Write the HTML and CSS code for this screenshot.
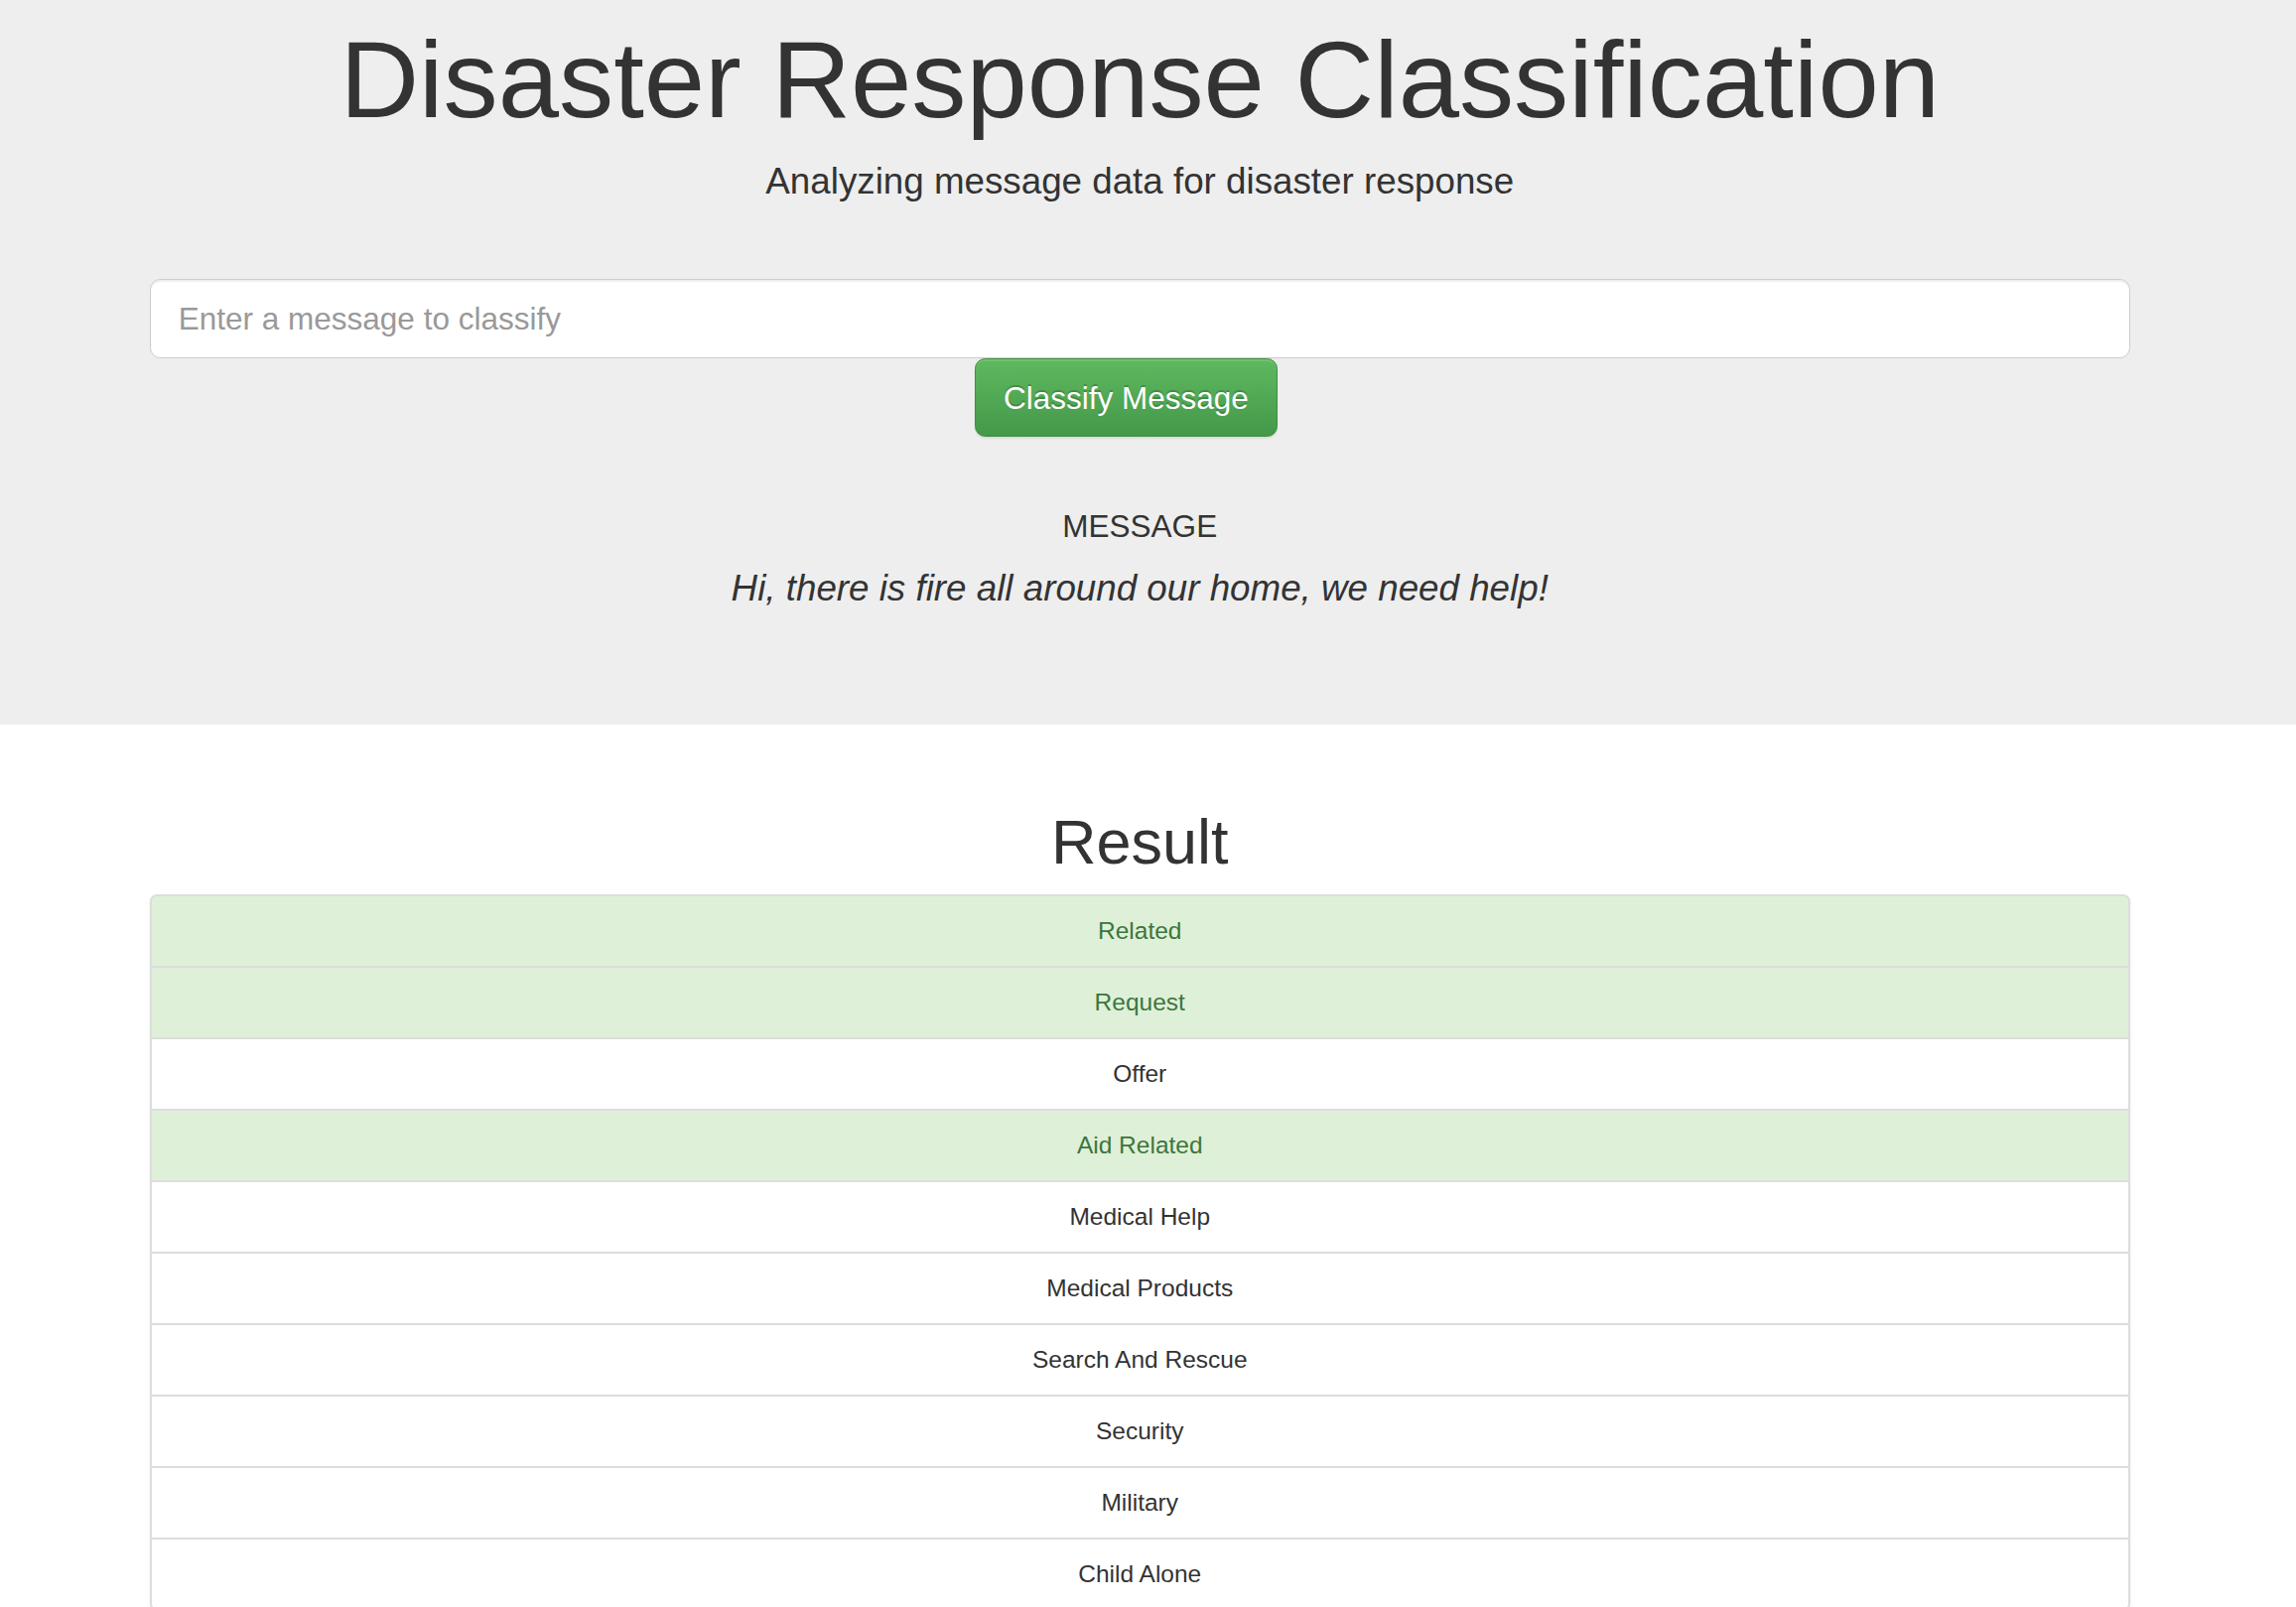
FILE: index.html
```html
<!DOCTYPE html>
<html lang="en">
<head>
<meta charset="utf-8">
<title>Disaster Response Classification</title>
<link rel="stylesheet" href="styles.css">
</head>
<body>
<div class="jumbotron">
  <div class="container">
    <h1 class="title">Disaster Response Classification</h1>
    <p class="lead">Analyzing message data for disaster response</p>
    <hr class="rule">
    <form class="query-form" action="#" method="get">
      <input type="text" class="query-input" name="query" placeholder="Enter a message to classify">
      <div class="button-offset">
        <button type="submit" class="btn-classify">Classify Message</button>
      </div>
    </form>
    <hr class="rule rule-message">
    <h4 class="message-label">MESSAGE</h4>
    <p class="message-text"><i>Hi, there is fire all around our home, we need help!</i></p>
  </div>
</div>
<div class="container results">
  <h1 class="result-title">Result</h1>
  <ul class="list-group">
    <li class="list-item success">Related</li>
    <li class="list-item success">Request</li>
    <li class="list-item">Offer</li>
    <li class="list-item success">Aid Related</li>
    <li class="list-item">Medical Help</li>
    <li class="list-item">Medical Products</li>
    <li class="list-item">Search And Rescue</li>
    <li class="list-item">Security</li>
    <li class="list-item">Military</li>
    <li class="list-item">Child Alone</li>
  </ul>
</div>
</body>
</html>
```

FILE: styles.css
```css
html {
  overflow: hidden;
}

body {
  margin: 0;
  font-family: "Liberation Sans", Arial, Helvetica, sans-serif;
  font-size: 24.5px;
  line-height: 35px;
  color: #333;
  background: #fff;
}

.container {
  box-sizing: border-box;
  width: 2047.5px;
  padding: 0 26.25px;
  margin-left: calc(50% - 1032px);
}

/* ---------- jumbotron ---------- */
.jumbotron {
  background: #eee;
  padding: 0.1px 0 84px;
  margin-bottom: 49px;
}

.title {
  margin: 18.6px 0 17.5px;
  font-size: 110.25px;
  line-height: 121.3px;
  font-weight: normal;
  text-align: center;
  color: #333;
}

.lead {
  margin: 0 0 26.25px;
  font-size: 36.75px;
  line-height: 52.5px;
  font-weight: 200;
  text-align: center;
}

.rule {
  margin: 35px 0;
  border: 0;
  border-top: 1.75px solid #eee;
  height: 0;
}

.rule-message {
  margin-top: 37px;
}

.query-form {
  margin: 0;
}

.query-input {
  display: block;
  box-sizing: border-box;
  width: 100%;
  height: 80.5px;
  padding: 17.5px 28px;
  font-family: inherit;
  font-size: 31.5px;
  line-height: 42px;
  color: #555;
  background: #fff;
  border: 1.75px solid #ccc;
  border-radius: 10.5px;
  box-shadow: inset 0 1.75px 1.75px rgba(0, 0, 0, 0.075);
  outline: none;
}

.query-input::placeholder {
  color: #999;
}

.button-offset {
  margin-left: 41.6667%;
}

.btn-classify {
  display: inline-block;
  box-sizing: border-box;
  padding: 17.5px 28px;
  font-family: inherit;
  font-size: 31.5px;
  line-height: 42px;
  color: #fff;
  background-color: #5cb85c;
  background-image: linear-gradient(to bottom, #5fb95f 0%, #44984a 100%);
  border: 1.75px solid #3e8f3e;
  border-radius: 10.5px;
  text-shadow: 0 -1.75px 0 rgba(0, 0, 0, 0.2);
  box-shadow: inset 0 1.75px 0 rgba(255, 255, 255, 0.15), 0 1.75px 1.75px rgba(0, 0, 0, 0.075);
  cursor: pointer;
}

.message-label {
  margin: 17.5px 0;
  font-size: 31.5px;
  line-height: 34.65px;
  font-weight: normal;
  text-align: center;
}

.message-text {
  margin: 19px 0 26.25px;
  font-size: 36.75px;
  line-height: 52.5px;
  text-align: center;
}

/* ---------- results ---------- */
.results {
  padding-top: 35px;
}

.result-title {
  margin: 0 0 17.5px;
  font-size: 63px;
  line-height: 69.3px;
  font-weight: normal;
  text-align: center;
}

.list-group {
  list-style: none;
  margin: 0 0 35px;
  padding: 0;
  border-radius: 7px;
  box-shadow: 0 1.75px 3.5px rgba(0, 0, 0, 0.075);
}

.list-item {
  padding: 17.5px 26.25px;
  margin-bottom: -2px;
  background: #fff;
  border: 2px solid #ddd;
  text-align: center;
  line-height: 35px;
  color: #333;
}

.list-item:first-child {
  border-top-left-radius: 7px;
  border-top-right-radius: 7px;
}

.list-item:last-child {
  margin-bottom: 0;
  border-bottom-left-radius: 7px;
  border-bottom-right-radius: 7px;
}

.list-item.success {
  background: #dff0d8;
  color: #3c763d;
}
```
